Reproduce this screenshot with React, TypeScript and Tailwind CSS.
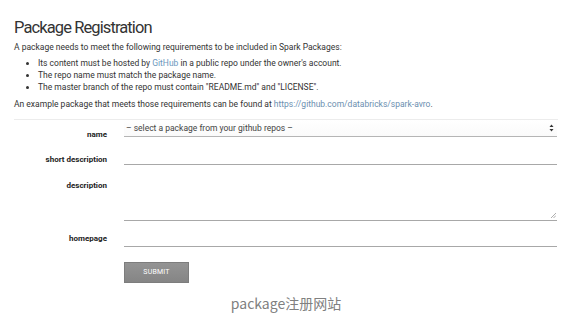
import React from 'react';

const labelCls = 'w-[93px] shrink-0 text-right text-[8px] leading-[12px] font-bold text-[#222]';

function SelectArrows() {
  return (
    <svg width="5" height="8" viewBox="0 0 5 8" className="text-[#333]">
      <path d="M2.5 0.5 L4.5 3 L0.5 3 Z" fill="currentColor" />
      <path d="M2.5 7.5 L4.5 5 L0.5 5 Z" fill="currentColor" />
    </svg>
  );
}

function ResizeGrip() {
  return (
    <svg width="6" height="6" viewBox="0 0 6 6" className="absolute right-[1px] bottom-[2px]">
      <path d="M1 6 L6 1 M3.5 6 L6 3.5" stroke="#999" strokeWidth="0.8" />
    </svg>
  );
}

export default function App() {
  return (
    <div className="w-[581px] h-[318px] bg-white overflow-hidden font-['Roboto','Liberation_Sans',sans-serif] text-[#333]">
      <div className="pl-[14px] pr-[23px]">
        <h1 className="pt-[17px] text-[16.5px] leading-[22px] font-normal tracking-[-0.9px] text-[#333]">Package Registration</h1>

        <p className="mt-[2px] text-[8.5px] leading-[12px]">
          A package needs to meet the following requirements to be included in Spark Packages:
        </p>
        <ul className="mt-[4px] pl-[24px] list-disc text-[8.5px] leading-[12px]">
          <li>
            Its content must be hosted by <span className="text-[#6b97bd]">GitHub</span> in a public repo under the owner's account.
          </li>
          <li>The repo name must match the package name.</li>
          <li>The master branch of the repo must contain "README.md" and "LICENSE".</li>
        </ul>
        <p className="mt-[5px] text-[8.5px] leading-[12px]">
          An example package that meets those requirements can be found at{' '}
          <span className="text-[#6b8fb0]">https://github.com/databricks/spark-avro</span>.
        </p>

        <div className="mt-[9px] h-px bg-[#ececec]" />
      </div>

      {/* form */}
      <div className="pl-[14px] pr-[24px]">
        <div className="flex items-start">
          <div className={`${labelCls} mt-[9px]`}>name</div>
          <div className="ml-[17px] flex-1 h-[17px] border-b border-[#b5b5b5] flex items-center justify-between pl-[2px] pr-[3px] text-[8.5px] text-[#444] bg-gradient-to-b from-white to-[#fafafa]">
            <span className="mt-[1px]">– select a package from your github repos –</span>
            <SelectArrows />
          </div>
        </div>

        <div className="flex items-start">
          <div className={`${labelCls} mt-[13px]`}>short description</div>
          <div className="ml-[17px] mt-[8px] flex-1 h-[16px] border-b border-[#a8a8a8]" />
        </div>

        <div className="flex items-start">
          <div className={`${labelCls} mt-[14px]`}>description</div>
          <div className="ml-[17px] mt-[7px] flex-1 h-[48px] border-b border-[#a8a8a8] relative">
            <ResizeGrip />
          </div>
        </div>

        <div className="flex items-start">
          <div className={`${labelCls} mt-[12px]`}>homepage</div>
          <div className="ml-[17px] mt-[10px] flex-1 h-[16px] border-b border-[#a8a8a8]" />
        </div>

        <div className="ml-[110px] mt-[15px] w-[65px] h-[21px] bg-gradient-to-b from-[#949494] to-[#858585] border border-[#7d7d7d] flex items-center justify-center text-[7px] text-white tracking-[0.2px]">
          SUBMIT
        </div>
      </div>

      <div className="mt-[10px] pr-[9px] text-center text-[14px] leading-[20px] text-[#808080] font-['Noto_Sans_CJK_SC','Noto_Sans',sans-serif]">
        package注册网站
      </div>
    </div>
  );
}
